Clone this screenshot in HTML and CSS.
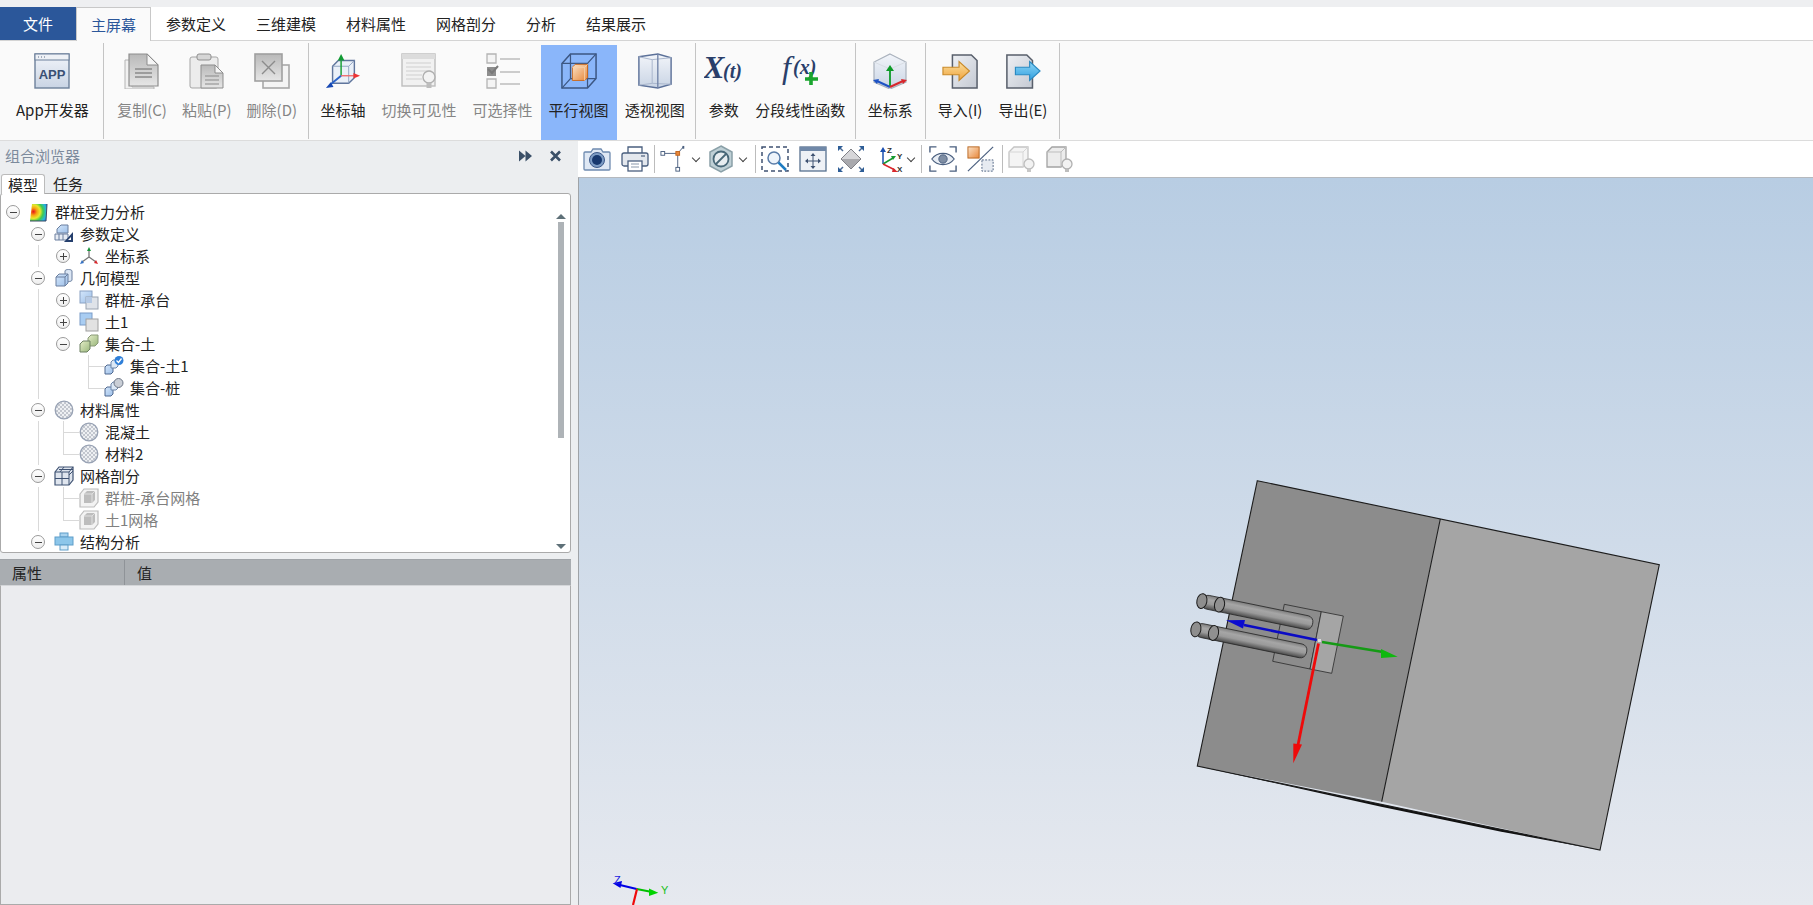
FILE: index.html
```html
<!DOCTYPE html>
<html lang="zh-CN">
<head>
<meta charset="utf-8">
<title>群桩受力分析</title>
<link rel="stylesheet" href="styles.css">
</head>
<body>
<svg class="defs" width="0" height="0" aria-hidden="true">
  <defs>
    <linearGradient id="gBlue" x1="0" y1="0" x2="0" y2="1"><stop offset="0" stop-color="#f2f5fa"/><stop offset="1" stop-color="#c9d4e4"/></linearGradient>
    <linearGradient id="gGray" x1="0" y1="0" x2="0" y2="1"><stop offset="0" stop-color="#b9b9b9"/><stop offset="1" stop-color="#e6e6e6"/></linearGradient>
    <linearGradient id="gDoc" x1="0" y1="0" x2="1" y2="1"><stop offset="0" stop-color="#eef0f4"/><stop offset="1" stop-color="#c4c9d2"/></linearGradient>
    <linearGradient id="gOrange" x1="0" y1="0" x2="0" y2="1"><stop offset="0" stop-color="#fbe0a0"/><stop offset="1" stop-color="#f0a33c"/></linearGradient>
    <linearGradient id="gCyan" x1="0" y1="0" x2="0" y2="1"><stop offset="0" stop-color="#8fd6f5"/><stop offset="1" stop-color="#2f9fe0"/></linearGradient>
    <linearGradient id="gCube" x1="0" y1="0" x2="1" y2="1"><stop offset="0" stop-color="#fbe3c8"/><stop offset="1" stop-color="#e8873a"/></linearGradient>
    <linearGradient id="gSky" x1="0" y1="0" x2="1" y2="1"><stop offset="0" stop-color="#d4e6fa"/><stop offset="1" stop-color="#9dbfe8"/></linearGradient>
    <linearGradient id="gLeaf" x1="0" y1="0" x2="1" y2="1"><stop offset="0" stop-color="#e4edc8"/><stop offset="1" stop-color="#9ab77c"/></linearGradient>
    <linearGradient id="gPile" x1="0" y1="0" x2="0" y2="1"><stop offset="0" stop-color="#7d7d7d"/><stop offset=".3" stop-color="#a6a6a6"/><stop offset=".6" stop-color="#9a9a9a"/><stop offset="1" stop-color="#4a4a4a"/></linearGradient>
    <radialGradient id="gHeat" cx=".2" cy=".45" r=".95"><stop offset="0" stop-color="#e8101a"/><stop offset=".22" stop-color="#f6a313"/><stop offset=".42" stop-color="#e9e82a"/><stop offset=".6" stop-color="#3fc94f"/><stop offset=".8" stop-color="#26b6dc"/><stop offset="1" stop-color="#2a5fd0"/></radialGradient>
    <pattern id="pDots" width="4" height="4" patternUnits="userSpaceOnUse"><rect width="4" height="4" fill="#eef0f3"/><rect width="2" height="2" fill="#c2c6ce"/><rect x="2" y="2" width="2" height="2" fill="#c2c6ce"/></pattern>

    <symbol id="r-app" viewBox="0 0 36 36"><rect x="1" y="1" width="34" height="34" fill="url(#gBlue)" stroke="#6d809b" stroke-width="1.4"/><rect x="1" y="1" width="34" height="6" fill="#eef1f6" stroke="#6d809b"/><path d="M4 4h1M7 4h1M10 4h1" stroke="#5c6d86"/><text x="18" y="26" class="svg-app">APP</text></symbol>
    <symbol id="r-copy" viewBox="0 0 36 36"><path d="M1 7h7v27h22v2H1z" fill="#f1f1f1" stroke="#b5b5b5"/><path d="M5 1h18l11 11v21H5z" fill="url(#gGray)" stroke="#8d8d8d" stroke-width="1.2"/><path d="M23 1v11h11z" fill="#f5f5f5" stroke="#8d8d8d"/><path d="M11 16h17M11 20h17M11 24h17" stroke="#8a8a8a" stroke-width="1.4"/></symbol>
    <symbol id="r-paste" viewBox="0 0 36 36"><rect x="1" y="4" width="28" height="31" rx="2" fill="#ececec" stroke="#a5a5a5"/><rect x="8" y="1" width="14" height="6" rx="2" fill="#d6d6d6" stroke="#8f8f8f"/><path d="M12 12h14l8 8v15H12z" fill="url(#gGray)" stroke="#8d8d8d"/><path d="M26 12v8h8z" fill="#f5f5f5" stroke="#8d8d8d"/><path d="M16 23h14M16 27h14M16 31h14" stroke="#8a8a8a" stroke-width="1.2"/></symbol>
    <symbol id="r-del" viewBox="0 0 36 36"><rect x="9" y="12" width="26" height="23" fill="#f4f4f4" stroke="#a8a8a8" stroke-width="1.6"/><rect x="1" y="1" width="27" height="27" fill="url(#gGray)" stroke="#a0a0a0" stroke-width="1.6"/><path d="M8 8l13 13M21 8L8 21" stroke="#8c8c8c" stroke-width="1.4"/></symbol>
    <symbol id="r-axis" viewBox="0 0 38 38"><path d="M8 14l6-6h17v18l-6 6H8z" fill="#eaf0f8" stroke="#5f759c" stroke-width="1.5"/><path d="M8 14h17v18M25 14l6-6" fill="none" stroke="#8fa3c2"/><path d="M17 24V8" stroke="#20a33c" stroke-width="1.6"/><path d="M17 1l-3.500 7h7z" fill="#129a33"/><path d="M17 24h14" stroke="#ef6a6a" stroke-width="1.4"/><path d="M37 24l-7-3v6z" fill="#e33"/><path d="M17 24L6 33" stroke="#2b63c8" stroke-width="2"/><path d="M1 37l8-1-3-5z" fill="#1748b3"/></symbol>
    <symbol id="r-vis" viewBox="0 0 36 36"><rect x="1" y="1" width="33" height="32" fill="#f1f1f1" stroke="#bdbdbd" stroke-width="1.4"/><rect x="1" y="1" width="33" height="5" fill="#dcdcdc"/><path d="M5 10h25M5 14h25M5 18h25M5 22h16M5 26h16" stroke="#cfcfcf"/><circle cx="28" cy="24" r="6" fill="#f3f3f3" stroke="#b0b0b0" stroke-width="1.4"/><rect x="25.500" y="30" width="5" height="5" fill="#bdbdbd"/></symbol>
    <symbol id="r-sel" viewBox="0 0 36 36"><path d="M2 1h9v9H2zM2 26h9v9H2z" fill="#f4f4f4" stroke="#b4b4b4" stroke-width="1.3"/><path d="M2 14h9v9H2z" fill="#8e8e8e"/><path d="M3 16l4 4 6-7" fill="none" stroke="#7a7a7a" stroke-width="2"/><path d="M15 6h20M15 19h20M15 31h20" stroke="#bdbdbd" stroke-width="1.6"/></symbol>
    <symbol id="r-par" viewBox="0 0 38 38"><path d="M10 1h27v26l-9 10H1V11z" fill="none" stroke="#3c5783" stroke-width="1.6"/><path d="M1 11h27v26M28 11l9-10M10 1v26h27M10 27L1 37" fill="none" stroke="#3c5783" stroke-width="1.3"/><path d="M12 15l3-3h13v14l-3 3H12z" fill="url(#gCube)" stroke="#c96a20"/><path d="M12 15h13v14M25 15l3-3" fill="none" stroke="#f7d3ad"/></symbol>
    <symbol id="r-per" viewBox="0 0 38 38"><path d="M2 4l20-3 14 4v28l-14 4-20-3z" fill="url(#gBlue)" stroke="#5c7199" stroke-width="1.5"/><path d="M22 1v36M2 4l14 3v25l-14 2M16 7l20-2M16 32l20 1" fill="none" stroke="#a8b5cb"/><path d="M22 1v36" stroke="#5c7199"/></symbol>
    <symbol id="r-x" viewBox="0 0 40 36"><text x="-1" y="25" class="svg-fx svg-fx-l">X</text><text x="19" y="25" class="svg-fx svg-fx-s">(t)</text></symbol>
    <symbol id="r-fx" viewBox="0 0 40 36"><text x="2" y="25" class="svg-fx svg-fx-f">f</text><text x="13" y="21" class="svg-fx svg-fx-s">(x)</text><path d="M31 19v13M25 26h13" stroke="#1aa52e" stroke-width="3.600"/></symbol>
    <symbol id="r-csys" viewBox="0 0 36 36"><path d="M18 1l16 8v20l-16 7-16-7V9z" fill="url(#gBlue)" stroke="#a9b1bc" stroke-width="1.2"/><path d="M2 9l16 7 16-7M18 16v20" fill="none" stroke="#d8dde4"/><path d="M18 33V16" stroke="#0c9a27" stroke-width="1.800"/><path d="M18 12l-4 6h8z" fill="#0c9a27"/><path d="M18 34L5 28" stroke="#1d52c4" stroke-width="2"/><path d="M1 27l6-1-2 5z" fill="#1d52c4"/><path d="M18 34l13-6" stroke="#d8272c" stroke-width="2"/><path d="M35 27l-6-1 2 5z" fill="#d8272c"/></symbol>
    <symbol id="r-imp" viewBox="0 0 38 36"><path d="M11 1h20l6 6v29H11z" fill="url(#gDoc)" stroke="#585f6b" stroke-width="1.6"/><path d="M1 14h17V8l11 10-11 10v-6H1z" fill="url(#gOrange)" stroke="#c98a2a" stroke-width="1.200"/></symbol>
    <symbol id="r-exp" viewBox="0 0 38 36"><path d="M2 1h21l6 6v29H2z" fill="url(#gDoc)" stroke="#585f6b" stroke-width="1.6"/><path d="M11 14h15V8l11 10-11 10v-6H11z" fill="url(#gCyan)" stroke="#2a8ac2" stroke-width="1.200"/></symbol>

    <symbol id="t-cam" viewBox="0 0 28 26"><path d="M2 6h6l2-3h8l2 3h6a1 1 0 011 1v16a1 1 0 01-1 1H2a1 1 0 01-1-1V7a1 1 0 011-1z" fill="#dfe8f4" stroke="#6f8bb0" stroke-width="1.300"/><circle cx="14" cy="14" r="7.500" fill="#7d9cc4" stroke="#3d5a8a"/><circle cx="14" cy="14" r="5" fill="#17386e"/></symbol>
    <symbol id="t-print" viewBox="0 0 28 26"><path d="M7 7V1h14v6" fill="#fff" stroke="#4a5f7f" stroke-width="1.300"/><rect x="1" y="7" width="26" height="13" rx="2" fill="#e4e8ee" stroke="#4a5f7f" stroke-width="1.300"/><rect x="7" y="15" width="14" height="10" fill="#fff" stroke="#4a5f7f" stroke-width="1.300"/><path d="M10 18h8M10 21h8" stroke="#8a98ab"/><path d="M20 10h4" stroke="#6d7d94" stroke-width="1.500"/></symbol>
    <symbol id="t-pt" viewBox="0 0 30 28"><path d="M3 8h16M19 8v17M19 8l6-7" stroke="#4a5f7f" fill="none"/><rect x="1" y="6" width="4" height="4" fill="#fff" stroke="#4a5f7f"/><rect x="17" y="6" width="4" height="4" fill="#e8873a" stroke="#c0641c"/><rect x="17" y="23" width="4" height="4" fill="#fff" stroke="#4a5f7f"/><rect x="24" y="0" width="2" height="3" fill="#4a5f7f"/></symbol>
    <symbol id="t-hex" viewBox="0 0 26 28"><path d="M13 1l11 6v14l-11 6-11-6V7z" fill="#bfd0d6" stroke="#8aa0a8" stroke-width="1.500"/><circle cx="13" cy="14" r="7.500" fill="#e7edf0" stroke="#486878" stroke-width="1.800"/><path d="M8 19l10-10" stroke="#486878" stroke-width="1.800"/></symbol>
    <symbol id="t-zoom" viewBox="0 0 28 28"><rect x="1" y="2" width="26" height="24" fill="none" stroke="#3f5272" stroke-width="1.500" stroke-dasharray="4 3"/><circle cx="13" cy="13" r="6" fill="#eef4fb" stroke="#5a7ca8" stroke-width="1.500"/><path d="M17.500 17.500L25 25" stroke="#1f7cc2" stroke-width="2.500"/></symbol>
    <symbol id="t-fit" viewBox="0 0 28 28"><rect x="1" y="2" width="26" height="24" fill="#eef1f6" stroke="#57708f" stroke-width="1.300"/><rect x="1" y="2" width="26" height="4" fill="#7088a8"/><path d="M14 9v14M7 16h14" stroke="#3f5272"/><path d="M14 8l-2.500 3h5zM14 24l-2.500-3h5zM6 16l3-2.500v5zM22 16l-3-2.500v5z" fill="#3f5272"/></symbol>
    <symbol id="t-dia" viewBox="0 0 28 28"><path d="M14 4l10 10-10 10L4 14z" fill="#a9a9ad"/><path d="M14 4l10 10H4z" fill="#d6d6d9"/><path d="M14 4l10 10-10 10L4 14z" fill="none" stroke="#808086"/><path d="M2 2l4 4M26 2l-4 4M2 26l4-4M26 26l-4-4" stroke="#4d6a92" stroke-width="1.500"/><path d="M1 1h5L1 6zM27 1h-5l5 5zM1 27h5l-5-5zM27 27h-5l5-5z" fill="#2d5d96"/></symbol>
    <symbol id="t-xyz" viewBox="0 0 28 28"><path d="M8 19V6" stroke="#1b4fb0" stroke-width="1.500"/><path d="M8 2l-3 5h6z" fill="#1b4fb0"/><path d="M8 19l10-6" stroke="#149a30" stroke-width="1.500"/><path d="M21 11l-5 0 2 4z" fill="#149a30"/><path d="M8 19l12 6" stroke="#d8272c" stroke-width="1.500"/><path d="M23 27l-5-4-1 4z" fill="#d8272c"/><text x="12" y="8" class="svg-xyz">Z</text><text x="22" y="14" class="svg-xyz">Y</text><text x="22" y="27" class="svg-xyz">X</text></symbol>
    <symbol id="t-eye" viewBox="0 0 30 28"><path d="M1 7V1h7M22 1h7v6M1 21v6h7M22 27h7v-6" fill="none" stroke="#4a5f7f" stroke-width="1.500"/><path d="M3 14c6-8 18-8 24 0-6 8-18 8-24 0z" fill="#e8edf4" stroke="#4a5f7f" stroke-width="1.300"/><circle cx="15" cy="14" r="4.500" fill="#7f8ea4" stroke="#4a5f7f"/></symbol>
    <symbol id="t-cut" viewBox="0 0 30 28"><rect x="1" y="1" width="12" height="12" fill="url(#gCube)" stroke="#b8651f"/><path d="M1 27L28 1" stroke="#4a5f7f" stroke-width="1.300"/><rect x="16" y="15" width="12" height="12" fill="#e7ebf1" stroke="#4a5f7f" stroke-dasharray="2 1.500"/></symbol>
    <symbol id="t-gh" viewBox="0 0 28 28"><path d="M1 7l5-5h14v15l-5 5H1z" fill="#f4f4f4" stroke="#c4c4c4" stroke-width="1.300"/><path d="M1 7h14v15M15 7l5-5" fill="none" stroke="#d6d6d6"/><circle cx="21" cy="19" r="5" fill="#f2f2f2" stroke="#bdbdbd" stroke-width="1.300"/><rect x="19" y="24" width="4" height="3" fill="#c7c7c7"/></symbol>
    <symbol id="t-gh2" viewBox="0 0 28 28"><path d="M1 7l5-5h14v15l-5 5H1z" fill="#ececec" stroke="#a3a3a3" stroke-width="1.300"/><path d="M1 7h14v15M15 7l5-5" fill="none" stroke="#bdbdbd"/><circle cx="21" cy="19" r="5" fill="#f2f2f2" stroke="#b0b0b0" stroke-width="1.300"/><rect x="19" y="24" width="4" height="3" fill="#bdbdbd"/></symbol>

    <symbol id="n-root" viewBox="0 0 20 20"><path d="M3 2h15l-1 17H1z" fill="url(#gHeat)"/><path d="M18 2l-1 17H1" fill="none" stroke="#3a4a63"/></symbol>
    <symbol id="n-param" viewBox="0 0 20 20"><path d="M5 3l2-2h7v8H3V5z" fill="url(#gSky)" stroke="#6a7f9f"/><path d="M1 10h13v6H1z" fill="#e6ebf3" stroke="#6a7f9f"/><path d="M5 10v6M9 10v6" stroke="#6a7f9f"/><path d="M19 8v10h-9z" fill="#253f6d"/><path d="M17 13v3h-3z" fill="#fff"/></symbol>
    <symbol id="n-csys" viewBox="0 0 20 20"><path d="M10 11V3M10 11L3 16M10 11l7 5" stroke-width="1.300" fill="none" stroke="#777"/><path d="M10 1l-2 4h4z" fill="#17923a"/><path d="M1 18l4-1-2-3z" fill="#3673c4"/><path d="M19 18l-4-1 2-3z" fill="#d8272c"/></symbol>
    <symbol id="n-geom" viewBox="0 0 20 20"><path d="M11 3c0-2 7-2 7 0v9c0 2-7 2-7 0z" fill="#dbe6f4" stroke="#6a7f9f"/><path d="M2 9l3-3h9v9l-3 3H2z" fill="url(#gSky)" stroke="#6a7f9f"/><path d="M2 9h9v9M11 9l3-3" fill="none" stroke="#6a7f9f"/></symbol>
    <symbol id="n-bool1" viewBox="0 0 20 20"><rect x="1" y="1" width="12" height="12" fill="url(#gSky)" stroke="#8aa2c4"/><rect x="7" y="7" width="12" height="12" fill="#dfe3e9" stroke="#9aa3b0"/><rect x="7" y="7" width="6" height="6" fill="#b5c9e4"/></symbol>
    <symbol id="n-bool2" viewBox="0 0 20 20"><rect x="1" y="1" width="12" height="12" fill="#a9cdf2" stroke="#7a9cc8"/><rect x="7" y="7" width="12" height="12" fill="#e2e2e2" stroke="#a0a0a0"/></symbol>
    <symbol id="n-green" viewBox="0 0 20 20"><path d="M9 4l3-3h7v8l-3 3H9z" fill="url(#gLeaf)" stroke="#8a9a78"/><path d="M1 10l3-3h7v8l-3 3H1z" fill="url(#gLeaf)" stroke="#6d8062"/></symbol>
    <symbol id="n-set1" viewBox="0 0 20 20"><path d="M1 11l2-2h6v7l-2 2H1z" fill="url(#gSky)" stroke="#4f6890"/><path d="M7 6l2-2h5v6l-2 2H7z" fill="#dbe8f6" stroke="#6d86aa"/><circle cx="15" cy="4.500" r="4.500" fill="#2f7fd8"/><path d="M12.500 4.500l2 2 3-4" fill="none" stroke="#fff" stroke-width="1.300"/></symbol>
    <symbol id="n-set2" viewBox="0 0 20 20"><path d="M1 11l2-2h6v7l-2 2H1z" fill="url(#gSky)" stroke="#4f6890"/><path d="M7 6l2-2h5v6l-2 2H7z" fill="#dbe8f6" stroke="#6d86aa"/><circle cx="14.500" cy="5" r="4.500" fill="#c9ced6" stroke="#6d7686"/></symbol>
    <symbol id="n-mat" viewBox="0 0 20 20"><circle cx="10" cy="10" r="8.800" fill="url(#pDots)" stroke="#98a2b4" stroke-width="1.300"/></symbol>
    <symbol id="n-mesh" viewBox="0 0 20 20"><path d="M1 6l4-5h14v13l-4 5H1z" fill="#dfe5ee" stroke="#3f5272" stroke-width="1.200"/><path d="M1 6h14v13M15 6l4-5M1 12.500h14M8 6v13M5 3.500h14M10 1L6 6M15 9l4-4" fill="none" stroke="#3f5272"/></symbol>
    <symbol id="n-mitem" viewBox="0 0 20 20"><path d="M1 6l4-5h14v13l-4 5H1z" fill="#f3f3f3" stroke="#bdbdbd" stroke-width="1.200"/><path d="M5 6l3-3h8v9l-3 3H5z" fill="#bdbdbd"/><path d="M5 6h8v9M13 6l3-3" fill="none" stroke="#e0e0e0"/></symbol>
    <symbol id="n-study" viewBox="0 0 20 20"><rect x="6" y="1" width="8" height="4" fill="#a9d3ef" stroke="#5f9ec9"/><rect x="1" y="5" width="18" height="8" fill="#8cc6ea" stroke="#5f9ec9"/><rect x="6" y="13" width="8" height="5" fill="#d7ebf8" stroke="#5f9ec9"/></symbol>
  </defs>
</svg>

<div class="topstrip"></div>

<nav class="tabbar">
  <div class="tab tab-file">文件</div>
  <div class="tab tab-active">主屏幕</div>
  <div class="tab">参数定义</div>
  <div class="tab">三维建模</div>
  <div class="tab">材料属性</div>
  <div class="tab">网格剖分</div>
  <div class="tab">分析</div>
  <div class="tab">结果展示</div>
</nav>

<section class="ribbon">
  <div class="group group-first">
    <div class="rb"><svg class="ico36"><use href="#r-app"/></svg><span>App开发器</span></div>
  </div>
  <div class="group group-edit">
    <div class="rb off"><svg class="ico36"><use href="#r-copy"/></svg><span>复制(C)</span></div>
    <div class="rb off"><svg class="ico36"><use href="#r-paste"/></svg><span>粘贴(P)</span></div>
    <div class="rb off"><svg class="ico36"><use href="#r-del"/></svg><span>删除(D)</span></div>
  </div>
  <div class="group group-view">
    <div class="rb"><svg class="ico36"><use href="#r-axis"/></svg><span>坐标轴</span></div>
    <div class="rb off"><svg class="ico36"><use href="#r-vis"/></svg><span>切换可见性</span></div>
    <div class="rb off"><svg class="ico36"><use href="#r-sel"/></svg><span>可选择性</span></div>
    <div class="rb on"><svg class="ico36"><use href="#r-par"/></svg><span>平行视图</span></div>
    <div class="rb"><svg class="ico36"><use href="#r-per"/></svg><span>透视视图</span></div>
  </div>
  <div class="group group-fn">
    <div class="rb rb-fn1"><svg class="ico36 wide"><use href="#r-x"/></svg><span>参数</span></div>
    <div class="rb rb-fn2"><svg class="ico36 wide"><use href="#r-fx"/></svg><span>分段线性函数</span></div>
  </div>
  <div class="group group-wide">
    <div class="rb"><svg class="ico36"><use href="#r-csys"/></svg><span>坐标系</span></div>
  </div>
  <div class="group group-wide">
    <div class="rb"><svg class="ico36"><use href="#r-imp"/></svg><span>导入(I)</span></div>
    <div class="rb"><svg class="ico36"><use href="#r-exp"/></svg><span>导出(E)</span></div>
  </div>
</section>

<main class="workspace">
  <aside class="side">
    <header class="side-title">
      <span class="side-name">组合浏览器</span>
      <span class="side-btns">
        <svg class="side-btn" viewBox="0 0 14 12"><path d="M0 0l7 6-7 6zM7 0l7 6-7 6z" fill="#3b5068"/></svg>
        <svg class="side-btn" viewBox="0 0 12 12"><path d="M1.500 1.500l9 9M10.500 1.500l-9 9" stroke="#3b5068" stroke-width="2.600"/></svg>
      </span>
    </header>
    <div class="side-tabs">
      <span class="stab stab-on">模型</span>
      <span class="stab">任务</span>
    </div>
    <div class="treebox">
      <div class="tree">
        <ul class="lv">
          <li>
            <div class="row"><i class="exp"></i><svg class="nic"><use href="#n-root"/></svg><span>群桩受力分析</span></div>
            <ul class="lv sub">
              <li>
                <div class="row"><i class="exp"></i><svg class="nic"><use href="#n-param"/></svg><span>参数定义</span></div>
                <ul class="lv sub line">
                  <li><div class="row"><i class="exp plus"></i><svg class="nic"><use href="#n-csys"/></svg><span>坐标系</span></div></li>
                </ul>
              </li>
              <li>
                <div class="row"><i class="exp"></i><svg class="nic"><use href="#n-geom"/></svg><span>几何模型</span></div>
                <ul class="lv sub line">
                  <li><div class="row"><i class="exp plus"></i><svg class="nic"><use href="#n-bool1"/></svg><span>群桩-承台</span></div></li>
                  <li><div class="row"><i class="exp plus"></i><svg class="nic"><use href="#n-bool2"/></svg><span>土1</span></div></li>
                  <li>
                    <div class="row"><i class="exp"></i><svg class="nic"><use href="#n-green"/></svg><span>集合-土</span></div>
                    <ul class="lv sub">
                      <li><div class="row leaf"><i class="exp none"></i><svg class="nic"><use href="#n-set1"/></svg><span>集合-土1</span></div></li>
                      <li><div class="row leaf"><i class="exp none"></i><svg class="nic"><use href="#n-set2"/></svg><span>集合-桩</span></div></li>
                    </ul>
                  </li>
                </ul>
              </li>
              <li>
                <div class="row"><i class="exp"></i><svg class="nic"><use href="#n-mat"/></svg><span>材料属性</span></div>
                <ul class="lv sub line">
                  <li><div class="row leaf"><i class="exp none"></i><svg class="nic"><use href="#n-mat"/></svg><span>混凝土</span></div></li>
                  <li><div class="row leaf"><i class="exp none"></i><svg class="nic"><use href="#n-mat"/></svg><span>材料2</span></div></li>
                </ul>
              </li>
              <li>
                <div class="row"><i class="exp"></i><svg class="nic"><use href="#n-mesh"/></svg><span>网格剖分</span></div>
                <ul class="lv sub line">
                  <li><div class="row leaf dim"><i class="exp none"></i><svg class="nic"><use href="#n-mitem"/></svg><span>群桩-承台网格</span></div></li>
                  <li><div class="row leaf dim"><i class="exp none"></i><svg class="nic"><use href="#n-mitem"/></svg><span>土1网格</span></div></li>
                </ul>
              </li>
              <li>
                <div class="row"><i class="exp"></i><svg class="nic"><use href="#n-study"/></svg><span>结构分析</span></div>
              </li>
            </ul>
          </li>
        </ul>
      </div>
      <div class="sbar">
        <i class="sb-up"></i>
        <i class="sb-thumb"></i>
        <i class="sb-down"></i>
      </div>
    </div>
    <div class="props">
      <div class="props-head">
        <span class="pcol pcol-name">属性</span>
        <span class="pcol">值</span>
      </div>
      <div class="props-body"></div>
    </div>
  </aside>

  <section class="viewwrap">
    <div class="toolbar">
      <svg class="tic"><use href="#t-cam"/></svg>
      <svg class="tic"><use href="#t-print"/></svg>
      <i class="tsep"></i>
      <svg class="tic tic-dd"><use href="#t-pt"/></svg><i class="chev chev-a"></i>
      <svg class="tic tic-dd"><use href="#t-hex"/></svg><i class="chev chev-b"></i>
      <i class="tsep"></i>
      <svg class="tic"><use href="#t-zoom"/></svg>
      <svg class="tic"><use href="#t-fit"/></svg>
      <svg class="tic"><use href="#t-dia"/></svg>
      <svg class="tic tic-dd"><use href="#t-xyz"/></svg><i class="chev"></i>
      <i class="tsep"></i>
      <svg class="tic tic-eye"><use href="#t-eye"/></svg>
      <svg class="tic"><use href="#t-cut"/></svg>
      <i class="tsep tsep-last"></i>
      <svg class="tic"><use href="#t-gh"/></svg>
      <svg class="tic"><use href="#t-gh2"/></svg>
    </div>
    <div class="viewport">
      <svg class="scene" viewBox="578 178 1235 727" preserveAspectRatio="none">
        <path d="M1197.300 766L1380 806.500 1500 831.500 1600 850z" fill="#111"/>
        <path d="M1257.300 480.700L1440.300 519 1381.700 801.700 1197.300 766z" fill="#8c8c8c"/>
        <path d="M1440.300 519L1659.300 564.700 1600 850 1381.700 801.700z" fill="#a5a5a5"/>
        <path d="M1257.300 480.700L1659.300 564.700 1600 850 1197.300 766zM1440.300 519L1381.700 801.700" fill="none" stroke="#1c1c1c" stroke-width="1.100"/>
        <path d="M1284.300 604.300L1321.300 611.700 1310 669 1272.700 661.300z" fill="#8c8c8c" stroke="#2a2a2a" stroke-width=".8"/>
        <path d="M1321.300 611.700L1343.300 616 1331.700 673.300 1310 669z" fill="#a5a5a5" stroke="#2a2a2a" stroke-width=".8"/>
        <g transform="translate(1203.300 594.200) rotate(11.6)">
          <rect x="0" y="0" width="113" height="14" rx="6" fill="url(#gPile)" stroke="#2a2a2a" stroke-width=".8"/>
          <ellipse cx="0" cy="7" rx="5" ry="7.500" fill="#8e8e8e" stroke="#1c1c1c"/>
          <ellipse cx="18" cy="7" rx="5" ry="7.500" fill="#909090" stroke="#1c1c1c"/>
        </g>
        <g transform="translate(1197.300 622.500) rotate(11.6)">
          <rect x="0" y="0" width="113" height="14" rx="6" fill="url(#gPile)" stroke="#2a2a2a" stroke-width=".8"/>
          <ellipse cx="0" cy="7" rx="5" ry="7.500" fill="#8e8e8e" stroke="#1c1c1c"/>
          <ellipse cx="18" cy="7" rx="5" ry="7.500" fill="#909090" stroke="#1c1c1c"/>
        </g>
        <path d="M1317 640L1244 625" stroke="#0b0bc4" stroke-width="2.600"/>
        <path d="M1226 620.300L1245 620 1243 628.500z" fill="#0b0bd0"/>
        <path d="M1322 642L1383 652" stroke="#159a15" stroke-width="2.600"/>
        <path d="M1397.700 656.700L1381 649 1381 658z" fill="#0fb80f"/>
        <path d="M1318.500 643.500L1298 745" stroke="#ef0a0a" stroke-width="2.800"/>
        <path d="M1293.300 763.300L1293.300 743.500 1302 744.500z" fill="#ef0a0a"/>
        <rect x="1318" y="639" width="3" height="3" fill="#ddd"/>
        <path d="M636.700 889L620 885" stroke="#0000e6" stroke-width="2.200"/>
        <path d="M612.700 883.300L622 881 620.500 888z" fill="#0000e6"/>
        <path d="M636.700 889L652 892" stroke="#00c000" stroke-width="2.200"/>
        <path d="M658.300 892.700L649 888.500 649 896z" fill="#00d400"/>
        <path d="M637 889L633 905" stroke="#ef0a0a" stroke-width="2.200"/>
        <text x="614" y="884" class="lbl lbl-z">Z</text>
        <text x="661" y="894" class="lbl lbl-y">Y</text>
      </svg>
    </div>
  </section>
</main>
</body>
</html>
```
FILE: styles.css
```css
* { box-sizing: border-box; }
html, body { margin: 0; height: 100%; }
body {
  width: 1813px;
  height: 905px;
  overflow: hidden;
  display: flex;
  flex-direction: column;
  background: #eceef0;
  color: #222;
  font: 15px/22px "Noto Sans CJK SC", "Noto Sans", sans-serif;
}
.defs { position: absolute; }

.topstrip { height: 7px; background: #eeeff1; flex: none; }

.tabbar {
  flex: none;
  display: flex;
  height: 34px;
  background: #fff;
  border-bottom: 1px solid #d4d4d4;
}
.tab { padding: 0 15px; line-height: 33px; height: 34px; white-space: nowrap; }
.tab-file { background: #2b579a; color: #fff; width: 76px; text-align: center; height: 33px; }
.tab-active {
  background: #fafafa;
  color: #2b579a;
  border: 1px solid #c8c8c8;
  border-bottom: 0;
  padding: 0 14px;
}

.ribbon {
  flex: none;
  height: 100px;
  display: flex;
  background: #fafafa;
  border-bottom: 1px solid #dcdcdc;
  padding-top: 4px;
}
.group {
  display: flex;
  padding: 0 3px;
  position: relative;
  margin-right: 1px;
}
.group::after {
  content: "";
  position: absolute;
  right: -1px;
  top: -2px;
  bottom: 1px;
  width: 1px;
  background: #c4c4c4;
}
.group-first { padding: 0 6.500px 0 8px; }
.group-edit { padding-left: 5.500px; }
.group-edit .rb { padding-left: 7.500px; padding-right: 7.500px; }
.group-view { padding: 0 2px 0 4px; }
.group-fn { padding: 0; }
.group-wide { padding: 0 4px; }
.rb {
  display: flex;
  flex-direction: column;
  align-items: center;
  padding: 8px 8px 0;
  white-space: nowrap;
}
.rb span { margin-top: 10px; }
.rb-fn1 { padding-left: 8px; padding-right: 5.500px; }
.rb-fn2 { padding-left: 6px; padding-right: 9.700px; }
.off { color: #858585; }
.on { background: #8ab6fa; }
.ico36 { width: 36px; height: 36px; display: block; }
.ico36.wide { width: 40px; }
.svg-app { font: bold 13px "Liberation Sans", sans-serif; fill: #3a5074; text-anchor: middle; }
.svg-fx { font-family: "Liberation Serif", serif; font-style: italic; font-weight: bold; fill: #2a3f6a; }
.svg-fx-l { font-size: 32px; }
.svg-fx-s { font-size: 20px; }
.svg-fx-f { font-size: 32px; font-weight: normal; }
.svg-xyz { font: bold 8px "Liberation Sans", sans-serif; fill: #333; }

.workspace { flex: 1; display: flex; min-height: 0; }

.side { width: 578px; flex: none; display: flex; flex-direction: column; padding-right: 7px; }
.side-title { flex: none; height: 33px; display: flex; align-items: center; justify-content: space-between; padding: 0 9px 4px 5px; }
.side-name { color: #7c8a9c; }
.side-btns { display: flex; align-items: center; gap: 17px; }
.side-btn { width: 13px; height: 12px; display: block; }
.side-tabs { flex: none; display: flex; height: 19px; padding-left: 1px; position: relative; z-index: 1; }
.stab { padding: 0 7px; line-height: 19px; height: 20px; }
.stab-on { background: #fff; border: 1px solid #bbb; border-bottom: 0; border-radius: 3px 3px 0 0; padding: 0 6px; }
.stab + .stab { margin-left: 1px; }

.treebox {
  flex: none;
  height: 360px;
  display: flex;
  background: #fff;
  border: 1px solid #aaa;
  border-radius: 3px;
  overflow: hidden;
}
.tree { flex: 1; padding-top: 7px; overflow: hidden; min-width: 0; }
.lv { list-style: none; margin: 0; padding: 0; position: relative; }
.sub { padding-left: 25px; }
.sub.line::before {
  content: "";
  position: absolute;
  left: 12px;
  top: 0;
  bottom: 0;
  width: 1px;
  background: #d9d9d9;
}
.row { height: 22px; display: flex; align-items: center; position: relative; padding-left: 5px; white-space: nowrap; }
.row.dim { color: #808080; }
.exp {
  width: 14px; height: 14px; flex: none;
  border: 1px solid #9a9a9a;
  border-radius: 50%;
  background: linear-gradient(#fff, #eee);
  position: relative;
}
.exp::before { content: ""; position: absolute; left: 2.500px; right: 2.500px; top: 5.500px; height: 1px; background: #444; }
.plus::after { content: ""; position: absolute; top: 2.500px; bottom: 2.500px; left: 5.500px; width: 1px; background: #444; }
.none { visibility: hidden; }
.nic { width: 20px; height: 20px; margin: 0 6px 0 9px; flex: none; }
.leaf::before {
  content: "";
  position: absolute;
  left: 12px;
  top: -11px;
  height: 22px;
  width: 16px;
  border-left: 1px solid #d9d9d9;
  border-bottom: 1px solid #d9d9d9;
}
li:first-child > .leaf::before { top: 0; height: 11px; }

.sbar { flex: none; width: 12px; margin-right: 3px; display: flex; flex-direction: column; align-items: center; padding: 20px 0 3px; }
.sb-up { border: 5px solid transparent; border-top: 0; border-bottom: 5px solid #5e7078; }
.sb-thumb { width: 6px; height: 216px; margin-top: 3px; background: #aeb3b7; }
.sb-down { border: 5px solid transparent; border-bottom: 0; border-top: 5px solid #5e7078; margin-top: auto; }

.props { flex: 1; margin-top: 6px; display: flex; flex-direction: column; min-height: 0; }
.props-head { flex: none; height: 26px; display: flex; background: #a9adb1; border-top: 1px solid #9fa3a7; }
.pcol { line-height: 25px; padding-left: 12px; }
.pcol-name { width: 125px; border-right: 1px solid #8f9398; }
.props-body { flex: 1; background: #ebecef; border: 1px solid #aaa; border-top: 1px solid #d4d6d9; }

.viewwrap { flex: 1; display: flex; flex-direction: column; min-width: 0; }
.toolbar { flex: none; height: 36px; background: #fff; display: flex; align-items: center; padding-left: 5px; }
.tic { width: 28px; height: 28px; margin-right: 10px; flex: none; }
.tic-dd { margin-right: 3px; }
.tic-eye { margin-left: 2px; }
.chev { width: 6px; height: 6px; border-right: 1px solid #444; border-bottom: 1px solid #444; transform: rotate(45deg); margin: -3px 13px 0 2px; flex: none; }
.chev-a { margin-right: 7.500px; }
.chev-b { margin-right: 15px; }
.tsep { width: 1px; height: 28px; background: #bcbcbc; margin: 0 5px 0 -5px; flex: none; }
.chev + .tsep { margin-left: -6px; }
.tsep-last { margin-left: -3px; }

.viewport { flex: 1; min-height: 0; position: relative; background: linear-gradient(#b8cde3, #e6e9ef); border-left: 1px solid #9fa3a7; border-top: 1px solid #b5b9be; }
.scene { position: absolute; left: -1px; top: 0; width: 1235px; height: 727px; }
.lbl { font: 11px "Liberation Sans", sans-serif; }
.lbl-z { fill: #1a1ae0; }
.lbl-y { fill: #18c018; }
```
